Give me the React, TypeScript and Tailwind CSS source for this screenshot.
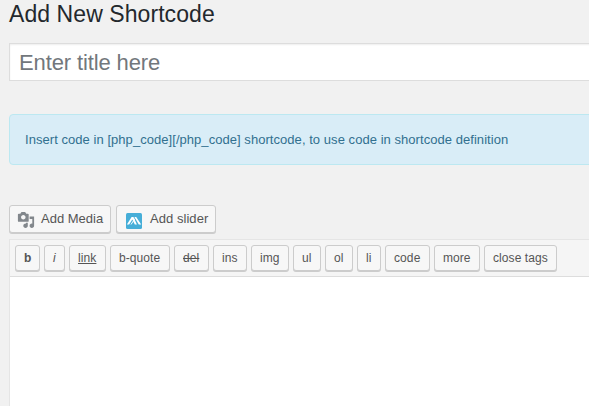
import React from "react";

const tags: { label: string; width: string; extra?: string }[] = [
  { label: "b", width: "w-[25px]", extra: "font-bold" },
  { label: "i", width: "w-[21px]", extra: "italic" },
  { label: "link", width: "w-[37px]", extra: "underline tracking-[0.1px]" },
  { label: "b-quote", width: "w-[60px]", extra: "tracking-[0.06px]" },
  { label: "del", width: "w-[35px]", extra: "line-through tracking-[0.1px]" },
  { label: "ins", width: "w-[34px]", extra: "tracking-[0.1px]" },
  { label: "img", width: "w-[38px]" },
  { label: "ul", width: "w-[28px]" },
  { label: "ol", width: "w-[28px]" },
  { label: "li", width: "w-[24px]" },
  { label: "code", width: "w-[45px]", extra: "tracking-[0.1px]" },
  { label: "more", width: "w-[46px]" },
  { label: "close tags", width: "w-[73px]", extra: "tracking-[0.08px]" },
];

function MediaIcon() {
  return (
    <svg className="mt-[2px] h-[18px] w-[18px] shrink-0" viewBox="0 0 20 20" fill="#82878c" fillRule="evenodd">
      <path d="M13 11V4c0-.55-.45-1-1-1h-1.67L9 1H5L3.67 3H2c-.55 0-1 .45-1 1v7c0 .55.45 1 1 1h10c.55 0 1-.45 1-1zM7 4.500c1.380 0 2.500 1.120 2.500 2.500S8.380 9.500 7 9.500 4.500 8.380 4.500 7 5.620 4.500 7 4.500zM14 6h5v10.500c0 1.380-1.120 2.500-2.500 2.500S14 17.880 14 16.500s1.120-2.500 2.500-2.500c.17 0 .34.02.5.05V9h-3V6zm-4 8.050V13h2v3.500c0 1.380-1.120 2.500-2.500 2.500S7 17.880 7 16.500 8.120 14 9.500 14c.17 0 .34.02.5.05z" />
    </svg>
  );
}

function SliderIcon() {
  return (
    <svg className="mt-1 h-4 w-4 shrink-0" viewBox="0 0 16 16">
      <rect width="16" height="16" rx="1.5" fill="#46aed8" />
      <path d="M.9 11.500 5.600 3.900h1.900l3.400 7.600H8.800L6.300 6.600l-3.200 4.900ZM8.400 3.900h1.800l5 7.600h-2.400Z" fill="#fff" />
      <path d="M5 11.500 8.900 5.600" stroke="#fff" strokeWidth="1" />
    </svg>
  );
}

export default function App() {
  const button = "flex shrink-0 items-center rounded-[3px] border border-[#ccc] bg-[#f7f7f7] text-[#555] shadow-[0_1px_0_#ccc]";
  return (
    <main className="h-[406px] w-[589px] overflow-hidden bg-[#f1f1f1] pl-[9px] font-['Liberation_Sans',Arial,sans-serif]">
      <h1 className="h-[43px] whitespace-nowrap pt-px text-[23px] leading-[27px] tracking-[0.07px] text-[#23282d]">Add New Shortcode</h1>
      <input
        aria-label="Title"
        placeholder="Enter title here"
        className="block h-[38px] w-[600px] border border-[#ddd] bg-white px-[9px] pt-[2px] text-[22px] tracking-[-0.12px] shadow-[inset_0_1px_2px_rgba(0,0,0,0.07)] outline-none placeholder:text-[#72777c]"
      />
      <div className="mt-[33px] flex h-[51px] w-[600px] items-center rounded-[4px] border border-[#bce8f1] bg-[#d9edf7] pl-[15px] text-[13px] tracking-[0.049px] text-[#31708f]">
        Insert code in [php_code][/php_code] shortcode, to use code in shortcode definition
      </div>
      <div className="mt-10 flex h-[34px] gap-[5px] text-[13px]">
        <button className={`${button} h-7 w-[102px] gap-[6px] pl-[7px]`}><MediaIcon />Add Media</button>
        <button className={`${button} h-7 w-[100px] gap-[8px] pl-[9px] tracking-[0.05px]`}><SliderIcon />Add slider</button>
      </div>
      <section className="h-[200px] w-[600px] border border-[#e5e5e5] bg-white">
        <div className="flex h-[37px] gap-1 border-b border-[#ddd] bg-[#f5f5f5] pl-[5px] pt-[5px]">
          {tags.map(({ label, width, extra = "" }) => (
            <button key={label} className={`${button} ${width} ${extra} h-[26px] whitespace-nowrap pl-2 text-[12px]`}>{label}</button>
          ))}
        </div>
      </section>
    </main>
  );
}
